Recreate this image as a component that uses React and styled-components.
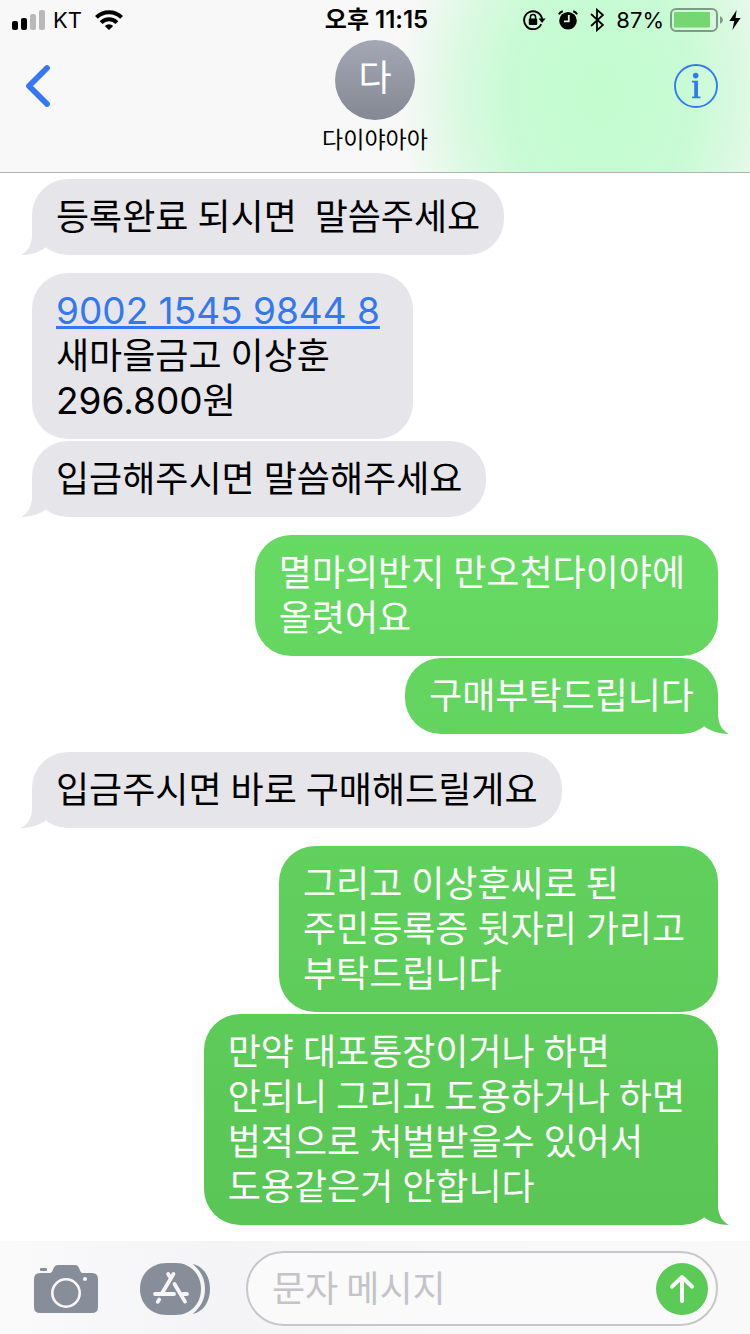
import React from 'react';
import styled, { createGlobalStyle } from 'styled-components';

const GlobalStyle = createGlobalStyle`
  * {
    box-sizing: border-box;
  }
  body {
    margin: 0;
    background: #fff;
    color: #000;
    font-family: Inter, 'Noto Sans CJK KR', sans-serif;
  }
  button {
    display: flex;
    align-items: center;
    border: 0;
    padding: 0;
    background: none;
    font: inherit;
    cursor: pointer;
  }
  svg {
    display: block;
    flex: none;
  }
`;

const Page = styled.div`
  display: flex;
  flex-direction: column;
  min-height: 100vh;
`;

const Header = styled.header`
  border-bottom: 1px solid #b2b2b2;
  background:
    radial-gradient(ellipse 200px 260px at 80% 55%, #c3fccf 0%, #c8fbd4 45%, #dcf9e2 72%, rgba(248, 248, 248, 0) 100%),
    #f8f8f8;
`;

const StatusBar = styled.div`
  display: grid;
  grid-template-columns: 1fr auto 1fr;
  align-items: center;
  height: 40px;
  padding: 0 9px 0 12px;
  font-size: 22px;
  line-height: 40px;
`;

const StatusGroup = styled.div`
  display: flex;
  align-items: center;
  justify-content: ${props => (props.$end ? 'flex-end' : 'flex-start')};
  gap: ${props => props.$gap}px;
`;

const Time = styled.time`
  font-size: 24px;
  font-weight: 600;
`;

const NavBar = styled.div`
  display: grid;
  grid-template-columns: 1fr auto 1fr;
  height: 132px;
  padding: 0 24px;
`;

const NavButton = styled.button`
  height: 92px;
  padding-right: ${props => (props.$end ? 8 : 0)}px;
  justify-self: ${props => (props.$end ? 'end' : 'start')};
`;

const Contact = styled.div`
  display: flex;
  flex-direction: column;
  align-items: center;
`;

const Avatar = styled.div`
  width: 80px;
  height: 80px;
  border-radius: 50%;
  background: linear-gradient(#a4a8b5, #848892);
  color: #fff;
  font-size: 36px;
  line-height: 76px;
  text-align: center;
`;

const ContactName = styled.h1`
  margin: 0;
  font-size: 23px;
  font-weight: 400;
  line-height: 40px;
`;

const Messages = styled.main`
  display: flex;
  flex: 1;
  flex-direction: column;
  padding: 6px 32px 15px;
`;

// the sent bubbles share one gradient that spans the whole window
const Bubble = styled.div`
  position: relative;
  align-self: ${props => (props.$sent ? 'flex-end' : 'flex-start')};
  max-width: 80%;
  margin-top: ${props => (props.$joined ? 2 : 18)}px;
  padding: 17px 24px 14px;
  border-radius: 36px;
  background: ${props => (props.$sent ? 'linear-gradient(#70ea6e, #5ac655 90%) fixed' : '#e5e5ea')};
  color: ${props => (props.$sent ? '#fff' : '#000')};
  font-family: Roboto, 'Noto Sans CJK KR', sans-serif;
  font-size: 36px;
  line-height: 45px;
  white-space: break-spaces;
  &:first-child {
    margin-top: 0;
  }
  &::after {
    content: ${props => (props.$tail ? "''" : 'none')};
    position: absolute;
    bottom: 0;
    ${props => (props.$sent ? 'right: -11px;' : 'left: -11px;')}
    width: 36px;
    height: 40px;
    background: inherit;
    clip-path: ${props =>
    props.$sent
      ? "path('M25 0V22C26 31 29 36 36 40C26 40 18 37 12 33L0 20Z')"
      : "path('M11 0V22C10 31 7 36 0 40C10 40 18 37 24 33L36 20Z')"};
  }
`;

const Line = styled.div`
  min-height: 45px;
`;

const Digits = styled.span`
  font-family: Inter, sans-serif;
  font-size: 37px;
  line-height: 1;
`;

const AccountLink = styled(Digits)`
  color: #3478f0;
  text-decoration: underline;
  text-decoration-thickness: 3px;
  text-underline-offset: 2px;
  text-decoration-skip-ink: none;
`;

const Toolbar = styled.form`
  display: flex;
  align-items: center;
  gap: 36px;
  padding: 10px 32px 8px 34px;
  background: linear-gradient(90deg, #fafafb, #f4f4f7 30%, #f8f8f9 60%, #f9f9f9);
`;

const ToolButton = styled.button`
  width: 70px;
`;

const InputBox = styled.div`
  display: flex;
  flex: 1;
  align-items: center;
  min-width: 0;
  height: 75px;
  padding: 0 8px 0 24px;
  border: 2px solid #c7c7cb;
  border-radius: 38px;
  background: #fafafa;
`;

const MessageInput = styled.input`
  flex: 1;
  min-width: 0;
  height: 62px;
  padding: 0 0 6px;
  border: 0;
  outline: 0;
  background: none;
  font-family: 'Noto Sans CJK KR', sans-serif;
  font-size: 36px;
  &::placeholder {
    color: #c4c4c8;
    opacity: 1;
  }
`;

const SendButton = styled.button`
  justify-content: center;
  width: 52px;
  height: 52px;
  border-radius: 50%;
  background: #5bca57;
`;

const Carrier = styled.span`
  padding-right: 6px;
`;

const SignalIcon = () => (
  <svg width="34" height="20" viewBox="0 0 34 20">
    <rect x="0" y="11" width="6" height="9" rx="2" />
    <rect x="9" y="8" width="6" height="12" rx="2" />
    <rect x="18" y="4" width="6" height="16" rx="2" fill="#b9b9b9" />
    <rect x="27" y="0" width="6" height="20" rx="2" fill="#b9b9b9" />
  </svg>
);

const WifiIcon = () => (
  <svg width="28" height="20" viewBox="0 0 28 20">
    <g fill="none" stroke="#000" strokeWidth="4">
      <path d="M1.4 7.4a17.8 17.8 0 0 1 25.2 0" />
      <path d="M6.1 12.6a11.2 11.2 0 0 1 15.8 0" />
    </g>
    <path d="M14 20l-4.2-4a6.2 6.2 0 0 1 8.4 0z" />
  </svg>
);

const RotationLockIcon = () => (
  <svg width="23" height="20" viewBox="0 0 23 20">
    <path d="M18.2 14.2A9 9 0 1 1 19 9" fill="none" stroke="#000" strokeWidth="1.9" />
    <path d="M15.6 8.4h7l-3.5 4.6z" />
    <path d="M7.4 9V7.2a2.6 2.6 0 0 1 5.2 0V9" fill="none" stroke="#000" strokeWidth="1.5" />
    <rect x="5.8" y="8.6" width="8.4" height="6.4" rx="1" />
  </svg>
);

const AlarmIcon = () => (
  <svg width="20" height="20" viewBox="0 0 20 20">
    <circle cx="10" cy="10.8" r="8.8" />
    <path d="M.9 4.4Q2 1.8 4.8 1.2M19.1 4.4Q18 1.8 15.2 1.2" fill="none" stroke="#000" strokeWidth="2" />
    <path d="M10.8 5v6.4H6" fill="none" stroke="#d4f9db" strokeWidth="1.8" />
  </svg>
);

const BluetoothIcon = () => (
  <svg width="14" height="24" viewBox="0 0 14 24">
    <path d="M1 6l12 11-6 5.2V1.8L13 7 1 18" fill="none" stroke="#000" strokeWidth="1.8" />
  </svg>
);

const BatteryIcon = () => (
  <svg width="53" height="24" viewBox="0 0 53 24">
    <rect x="1" y="1" width="46" height="22" rx="5" fill="none" stroke="#7f9a86" strokeWidth="2" />
    <rect x="4" y="4" width="36" height="15.5" rx="1" fill="#76d672" />
    <path d="M50 8q3 1.4 3 4t-3 4z" fill="#7f9a86" />
  </svg>
);

const BoltIcon = () => (
  <svg width="12" height="20" viewBox="0 0 12 20">
    <path d="M7.6 0L.4 11h4.8l-1.8 9L11.6 8H6.6z" />
  </svg>
);

const BackIcon = () => (
  <svg width="28" height="44" viewBox="0 0 28 44" fill="none" stroke="#3478f6" strokeWidth="5.8">
    <path d="M23 4L5 22l18 18" strokeLinecap="round" strokeLinejoin="round" />
  </svg>
);

const InfoIcon = () => (
  <svg width="44" height="44" viewBox="0 0 44 44" fill="#3478f6">
    <circle cx="22" cy="22" r="21" fill="none" stroke="#3478f6" strokeWidth="1.9" />
    <circle cx="21.7" cy="11.6" r="2.8" />
    <path d="M18 16.8h6v15.8h2.4v1.6h-8.4v-1.6h2.2V18.4H18z" />
  </svg>
);

const CameraIcon = () => (
  <svg width="64" height="48" viewBox="0 0 64 48">
    <rect x="6" y="3" width="7" height="3" rx="1" fill="#878e99" />
    <path
      d="M6 8h10c2.6 0 3-5.4 5.4-7.2Q22.4 0 24 0h17q2 0 3 1.2C46 4 46 8 48.6 8H58q6 0 6 6v28q0 6-6 6H6q-6 0-6-6V14q0-6 6-6z"
      fill="#878e99"
    />
    <circle cx="32" cy="28" r="13.7" fill="none" stroke="#f8f8fa" strokeWidth="2.6" />
    <circle cx="51" cy="14" r="2" fill="#f8f8fa" />
  </svg>
);

const AppStoreIcon = () => (
  <svg width="70" height="52" viewBox="0 0 70 52">
    <path d="M52.5 1C63 3 70 13 70 26s-7 23-17.5 25C60 45 65 37 65 26S60 7 52.5 1z" fill="#878e99" />
    <path d="M27 0h9c14 0 25 11 25 26S50 52 36 52h-9C11 52 0 41 0 26S11 0 27 0z" fill="#878e99" />
    <g fill="none" stroke="#f6f6f8" strokeWidth="3.8" strokeLinecap="round">
      <path d="M33.5 11L22 30.2M28.2 11l2.4 4M34.5 21L45 38.6M15 31h19M43 31h4M19.2 36.6l-1.4 2.2" />
    </g>
  </svg>
);

const SendIcon = () => (
  <svg width="28" height="30" viewBox="0 0 28 30" fill="none" stroke="#fff" strokeWidth="4">
    <path d="M14 27V3M4 12.6L14 3l10 9.6" strokeLinecap="round" strokeLinejoin="round" />
  </svg>
);

const messages = [
  { id: 1, tail: true, lines: ['등록완료 되시면  말씀주세요'] },
  { id: 2, account: '9002 1545 9844 8', lines: ['새마을금고 이상훈'], amount: '296.800' },
  { id: 3, joined: true, tail: true, lines: ['입금해주시면 말씀해주세요'] },
  { id: 4, sent: true, lines: ['멸마의반지 만오천다이야에 ', '올렷어요'] },
  { id: 5, sent: true, joined: true, tail: true, lines: ['구매부탁드립니다'] },
  { id: 6, tail: true, lines: ['입금주시면 바로 구매해드릴게요'] },
  { id: 7, sent: true, lines: ['그리고 이상훈씨로 된 ', '주민등록증 뒷자리 가리고 ', '부탁드립니다'] },
  {
    id: 8,
    sent: true,
    joined: true,
    tail: true,
    lines: [
      '만약 대포통장이거나 하면 ',
      '안되니 그리고 도용하거나 하면 ',
      '법적으로 처벌받을수 있어서 ',
      '도용같은거 안합니다'
    ]
  }
];

const Message = ({ sent, joined, tail, account, lines, amount }) => (
  <Bubble $sent={sent} $joined={joined} $tail={tail}>
    {account && (
      <Line>
        <AccountLink as="a" href="#account">
          {account}
        </AccountLink>{' '}
      </Line>
    )}
    {lines.map(line => (
      <Line key={line}>{line}</Line>
    ))}
    {amount && (
      <Line>
        <Digits>{amount}</Digits>원
      </Line>
    )}
  </Bubble>
);

export default function App() {
  return (
    <Page>
      <GlobalStyle />
      <Header>
        <StatusBar>
          <StatusGroup $gap={7}>
            <SignalIcon />
            <Carrier>KT</Carrier>
            <WifiIcon />
          </StatusGroup>
          <Time>오후 11:15</Time>
          <StatusGroup $gap={6} $end>
            <StatusGroup $gap={12}>
              <RotationLockIcon />
              <AlarmIcon />
              <BluetoothIcon />
              <span>87%</span>
            </StatusGroup>
            <BatteryIcon />
            <BoltIcon />
          </StatusGroup>
        </StatusBar>
        <NavBar>
          <NavButton aria-label="뒤로">
            <BackIcon />
          </NavButton>
          <Contact>
            <Avatar>다</Avatar>
            <ContactName>다이야아아</ContactName>
          </Contact>
          <NavButton aria-label="정보" $end>
            <InfoIcon />
          </NavButton>
        </NavBar>
      </Header>
      <Messages>
        {messages.map(message => (
          <Message key={message.id} {...message} />
        ))}
      </Messages>
      <Toolbar onSubmit={e => e.preventDefault()}>
        <ToolButton type="button" aria-label="카메라">
          <CameraIcon />
        </ToolButton>
        <ToolButton type="button" aria-label="앱">
          <AppStoreIcon />
        </ToolButton>
        <InputBox>
          <MessageInput type="text" aria-label="문자 메시지" placeholder="문자 메시지" />
          <SendButton type="submit" aria-label="보내기">
            <SendIcon />
          </SendButton>
        </InputBox>
      </Toolbar>
    </Page>
  );
}
